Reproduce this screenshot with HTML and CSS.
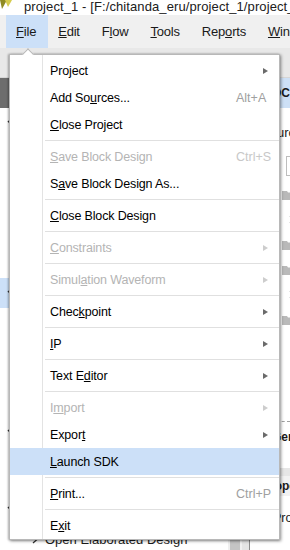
FILE: index.html
```html
<!DOCTYPE html>
<html>
<head>
    <meta charset="UTF-8">
    <title>project_1 - Vivado</title>
    <link rel="stylesheet" href="styles.css">
</head>
<body>
    <!-- window title -->
    <div class="titlebar">
        <svg class="logo" width="12" height="10" viewBox="0 0 12 10">
            <polygon points="0,0 7,0 2,9" fill="#8f8a22"/>
            <polygon points="5,0 12,0 8,7" fill="#d6cc4e"/>
        </svg>
        <span class="title">project_1 - [F:/chitanda_eru/project_1/project_1.xpr] - Vivado 2018.3</span>
    </div>

    <!-- main menu -->
    <div class="menubar">
        <span class="mitem open"><u>F</u>ile</span>
        <span class="mitem"><u>E</u>dit</span>
        <span class="mitem">F<u>l</u>ow</span>
        <span class="mitem"><u>T</u>ools</span>
        <span class="mitem">Rep<u>o</u>rts</span>
        <span class="mitem"><u>W</u>indow</span>
    </div>
    <div class="toolbar"></div>

    <div class="workspace">
        <div class="flow-nav">
            <div class="nav-header">FLOW NAVIGATOR</div>
            <div class="nav-body">
                <div class="nav-list">
                    <div class="nav-group">
                        <div class="nav-section">
                            <svg width="9" height="6" viewBox="0 0 9 6"><polyline points="1,1 4.5,4.5 8,1" fill="none" stroke="#333" stroke-width="1.5"/></svg>
                            PROJECT MANAGER
                        </div>
                        <div class="nav-item">Settings</div>
                        <div class="nav-item">Add Sources</div>
                        <div class="nav-item">Language Templates</div>
                        <div class="nav-item">IP Catalog</div>
                    </div>
                    <div class="nav-group">
                        <div class="nav-section selected">
                            <svg width="9" height="6" viewBox="0 0 9 6"><polyline points="1,1 4.5,4.5 8,1" fill="none" stroke="#333" stroke-width="1.5"/></svg>
                            IP INTEGRATOR
                        </div>
                        <div class="nav-item">Create Block Design</div>
                        <div class="nav-item">Open Block Design</div>
                        <div class="nav-item">Generate Block Design</div>
                    </div>
                    <div class="nav-group">
                        <div class="nav-section">
                            <svg width="9" height="6" viewBox="0 0 9 6"><polyline points="1,1 4.5,4.5 8,1" fill="none" stroke="#333" stroke-width="1.5"/></svg>
                            SIMULATION
                        </div>
                        <div class="nav-item">Run Simulation</div>
                    </div>
                    <div class="nav-group">
                        <div class="nav-section">
                            <svg width="9" height="6" viewBox="0 0 9 6"><polyline points="1,1 4.5,4.5 8,1" fill="none" stroke="#333" stroke-width="1.5"/></svg>
                            RTL ANALYSIS
                        </div>
                        <div class="nav-item sub">
                            <svg width="10" height="9" viewBox="0 0 10 9"><polyline points="3,1 7,4.5 3,8" fill="none" stroke="#333" stroke-width="1.3"/></svg>
                            Open Elaborated Design
                        </div>
                    </div>
                </div>
                <div class="vscroll"><div class="thumb"></div></div>
            </div>
        </div>
        <div class="splitter"></div>

        <div class="main">
            <div class="main-header">BLOCK DESIGN - design_1</div>
            <div class="src-tabs">Sources</div>
            <div class="src-toolbar"><div class="search"></div></div>
            <div class="tree">
                <div class="row lvl1">
                    <svg class="tw" width="10" height="9" viewBox="0 0 10 9"><polyline points="1,3 5,7 9,3" fill="none" stroke="#555" stroke-width="1.2"/></svg>
                    <svg class="folder" width="12" height="10" viewBox="0 0 12 10"><path d="M0 1h5l1 1.5h6V10H0z" fill="#b9b9b9"/></svg>
                    Design Sources (1)
                </div>
                <div class="row lvl2">
                    <svg class="tw" width="10" height="9" viewBox="0 0 10 9"><polyline points="3,1 7,4.5 3,8" fill="none" stroke="#555" stroke-width="1.2"/></svg>
                    design_1_wrapper (design_1_wrapper.v)
                </div>
                <div class="row lvl1">
                    <svg class="tw" width="10" height="9" viewBox="0 0 10 9"><polyline points="3,1 7,4.5 3,8" fill="none" stroke="#555" stroke-width="1.2"/></svg>
                    <svg class="folder" width="12" height="10" viewBox="0 0 12 10"><path d="M0 1h5l1 1.5h6V10H0z" fill="#b9b9b9"/></svg>
                    Constraints
                </div>
                <div class="row lvl1">
                    <svg class="tw" width="10" height="9" viewBox="0 0 10 9"><polyline points="1,3 5,7 9,3" fill="none" stroke="#555" stroke-width="1.2"/></svg>
                    <svg class="folder" width="12" height="10" viewBox="0 0 12 10"><path d="M0 1h5l1 1.5h6V10H0z" fill="#b9b9b9"/></svg>
                    Simulation Sources (1)
                </div>
                <div class="row lvl2">
                    <svg class="tw" width="10" height="9" viewBox="0 0 10 9"><polyline points="3,1 7,4.5 3,8" fill="none" stroke="#555" stroke-width="1.2"/></svg>
                    sim_1 (1)
                </div>
                <div class="row lvl1">
                    <svg class="tw" width="10" height="9" viewBox="0 0 10 9"><polyline points="3,1 7,4.5 3,8" fill="none" stroke="#555" stroke-width="1.2"/></svg>
                    <svg class="folder" width="12" height="10" viewBox="0 0 12 10"><path d="M0 1h5l1 1.5h6V10H0z" fill="#b9b9b9"/></svg>
                    Utility Sources
                </div>
            </div>
            <div class="lower">
                <div class="hier-tabs"></div>
                <div class="gen-row">General</div>
                <div class="split-h"></div>
                <div class="props-head">Properties</div>
                <div class="props-body">Project</div>
            </div>
        </div>
    </div>

    <!-- open File menu -->
    <div class="dropdown">
        <div class="item"><span class="label">Pro<u>j</u>ect</span><span class="arrow"></span></div>
        <div class="item"><span class="label">Add So<u>u</u>rces...</span><span class="key">Alt+A</span></div>
        <div class="item"><span class="label"><u>C</u>lose Project</span></div>
        <div class="sep"></div>
        <div class="item disabled"><span class="label"><u>S</u>ave Block Design</span><span class="key">Ctrl+S</span></div>
        <div class="item"><span class="label">S<u>a</u>ve Block Design As...</span></div>
        <div class="sep"></div>
        <div class="item"><span class="label"><u>C</u>lose Block Design</span></div>
        <div class="sep"></div>
        <div class="item disabled"><span class="label"><u>C</u>onstraints</span><span class="arrow"></span></div>
        <div class="sep"></div>
        <div class="item disabled"><span class="label">Simul<u>a</u>tion Waveform</span><span class="arrow"></span></div>
        <div class="sep"></div>
        <div class="item"><span class="label">Chec<u>k</u>point</span><span class="arrow"></span></div>
        <div class="sep"></div>
        <div class="item"><span class="label"><u>I</u>P</span><span class="arrow"></span></div>
        <div class="sep"></div>
        <div class="item"><span class="label">Text E<u>d</u>itor</span><span class="arrow"></span></div>
        <div class="sep"></div>
        <div class="item disabled"><span class="label">I<u>m</u>port</span><span class="arrow"></span></div>
        <div class="item"><span class="label">Expor<u>t</u></span><span class="arrow"></span></div>
        <div class="item hover"><span class="label"><u>L</u>aunch SDK</span></div>
        <div class="sep"></div>
        <div class="item"><span class="label"><u>P</u>rint...</span><span class="key">Ctrl+P</span></div>
        <div class="sep"></div>
        <div class="item"><span class="label">E<u>x</u>it</span></div>
    </div>
</body>
</html>
```

FILE: styles.css
```css
body {
    margin: 0;
    width: 290px;
    height: 550px;
    overflow: hidden;
    position: relative;
    background-color: #f0f0f0;
    font-family: "Liberation Sans", Arial, sans-serif;
    font-size: 12.5px;
    color: #1a1a1a;
}
u {
    text-underline-offset: 1px;
}

/* title bar */
.titlebar {
    height: 15px;
    background-color: #ffffff;
    display: flex;
    align-items: flex-start;
    white-space: nowrap;
    overflow: hidden;
}
.logo {
    flex: none;
}
.title {
    margin-left: 12px;
    margin-top: -1px;
    font-size: 13px;
    line-height: 15px;
    letter-spacing: 0.1px;
    color: #202020;
}

/* menu bar */
.menubar {
    height: 33px;
    display: flex;
    padding-left: 6px;
    background-color: #f0f0f0;
    white-space: nowrap;
}
.mitem {
    padding: 0 12px 0 10px;
    line-height: 33px;
    font-size: 13px;
    letter-spacing: -0.2px;
}
.mitem.open {
    background-color: #cce0f8;
}
.toolbar {
    height: 30px;
    background-color: #e8e8e8;
    border-bottom: 1px solid #d6d6d6;
    box-sizing: border-box;
}

/* workspace behind the menu */
.workspace {
    display: flex;
    height: 472px;
}
.flow-nav {
    flex: none;
    width: 242px;
    display: flex;
    flex-direction: column;
    background-color: #ffffff;
    overflow: hidden;
}
.nav-header {
    height: 30px;
    line-height: 30px;
    padding-left: 10px;
    background-color: #6d6d6d;
    color: #ffffff;
    font-weight: bold;
    font-size: 12px;
}
.nav-body {
    flex: 1;
    display: flex;
    overflow: hidden;
}
.nav-list {
    flex: 1;
    white-space: nowrap;
}
.nav-group {
    padding-bottom: 16px;
}
.nav-section {
    height: 30px;
    display: flex;
    align-items: center;
    gap: 6px;
    padding-left: 7px;
    font-weight: bold;
    font-size: 12px;
}
.nav-section.selected {
    background-color: #cce0f8;
}
.nav-item {
    height: 31px;
    line-height: 31px;
    padding-left: 45px;
    font-size: 13px;
}
.nav-item.sub {
    display: flex;
    align-items: center;
    gap: 5px;
    padding-left: 30px;
}
.vscroll {
    flex: none;
    width: 14px;
    background-color: #f0f0f0;
    display: flex;
    align-items: flex-end;
}
.thumb {
    width: 10px;
    height: 120px;
    margin: 0 2px;
    background-color: #c4c4c4;
}
.splitter {
    flex: none;
    width: 7px;
    background-color: #e4e4e4;
    border-right: 1px solid #8c8c8c;
}

.main {
    flex: 1;
    min-width: 0;
    display: flex;
    flex-direction: column;
    background-color: #ffffff;
    overflow: hidden;
    white-space: nowrap;
}
.main-header {
    height: 30px;
    line-height: 30px;
    padding-left: 6px;
    background-color: #cde0f6;
    font-weight: bold;
    font-size: 12px;
}
.src-tabs {
    height: 42px;
    box-sizing: border-box;
    padding: 16px 0 0 11px;
    line-height: 18px;
    font-size: 13px;
}
.src-toolbar {
    height: 30px;
    box-sizing: border-box;
    padding: 6px 0 0 36px;
}
.search {
    width: 120px;
    height: 18px;
    border: 1px solid #bdbdbd;
}
.tree {
    flex: 1;
    padding-top: 2px;
}
.row {
    height: 25px;
    display: flex;
    align-items: center;
    gap: 4px;
    font-size: 12.5px;
}
.row svg {
    flex: none;
}
.row.lvl1 {
    padding-left: 18px;
}
.row.lvl2 {
    padding-left: 37px;
}
.lower {
    height: 142px;
    flex: none;
}
.hier-tabs {
    height: 13px;
    border-bottom: 1px dashed #a0a0a0;
}
.gen-row {
    height: 30px;
    line-height: 30px;
    padding-left: 22px;
    font-weight: bold;
    font-size: 12px;
}
.split-h {
    height: 8px;
    margin-top: 16px;
    background-color: #e6e6e6;
}
.props-head {
    height: 20px;
    line-height: 20px;
    padding-left: 12px;
    background-color: #f2f2f2;
    font-weight: bold;
    font-size: 12px;
}
.props-body {
    padding: 14px 0 0 23px;
    line-height: 16px;
}

/* the File dropdown */
.dropdown {
    position: absolute;
    left: 9px;
    top: 54px;
    width: 269px;
    padding-top: 2px;
    border: 1px solid #b8b8b8;
    background: linear-gradient(90deg, #ffffff 32px, #e3e3e3 32px, #e3e3e3 33px, #ffffff 33px);
    box-shadow: 1px 1px 3px rgba(0, 0, 0, 0.45), -1px 0 2px rgba(0, 0, 0, 0.25);
    white-space: nowrap;
}
.dropdown::before {
    content: "";
    position: absolute;
    left: 14px;
    top: -5px;
    width: 7px;
    height: 7px;
    background-color: #ffffff;
    border-left: 1px solid #b8b8b8;
    border-top: 1px solid #b8b8b8;
    transform: rotate(45deg);
}
.item {
    height: 27px;
    display: flex;
    align-items: center;
    padding-left: 40px;
    letter-spacing: -0.15px;
    color: #000000;
}
.item .label {
    flex: 1;
}
.item .key {
    width: 43px;
    color: #a0a0a0;
    letter-spacing: 0;
}
.item .arrow {
    width: 0;
    height: 0;
    margin-right: 11px;
    border-left: 5px solid #6a6a6a;
    border-top: 3.5px solid transparent;
    border-bottom: 3.5px solid transparent;
}
.item.disabled {
    color: #b4b4b4;
}
.item.disabled .key {
    color: #c8c8c8;
}
.item.disabled .arrow {
    border-left-color: #cdcdcd;
}
.item.hover {
    background-color: #cce0f8;
}
.sep {
    height: 1px;
    margin: 2px 0 2px 35px;
    background-color: #e0e0e0;
}
```
